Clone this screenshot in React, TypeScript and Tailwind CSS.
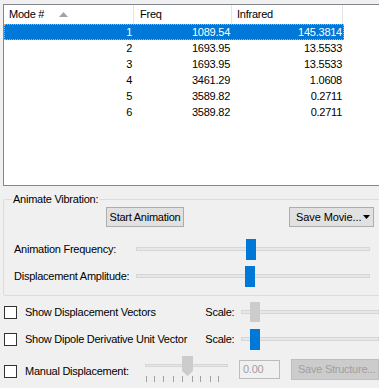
const modes = [
  { n: '1', freq: '1089.54', ir: '145.3814' },
  { n: '2', freq: '1693.95', ir: '13.5533' },
  { n: '3', freq: '1693.95', ir: '13.5533' },
  { n: '4', freq: '3461.29', ir: '1.0608' },
  { n: '5', freq: '3589.82', ir: '0.2711' },
  { n: '6', freq: '3589.82', ir: '0.2711' },
]

const ticks = [6, 14, 23, 33, 42, 52, 60, 70, 78]

interface TrackBarProps {
  width: number
  thumbLeft: number
  blue?: boolean
  tall?: boolean
}

function TrackBar({ width, thumbLeft, blue, tall }: TrackBarProps) {
  return (
    <div className={tall ? 'relative h-[21px]' : 'relative h-[20px]'} style={{ width }}>
      <div className="absolute left-0 right-0 top-[8px] h-[4px] bg-[#e7e7e7] border border-[#d6d6d6]" />
      <div
        className={
          blue
            ? 'absolute top-0 h-full w-[10px] bg-[#0078d7]'
            : 'absolute top-0 h-full w-[10px] bg-[#cccccc]'
        }
        style={{ left: thumbLeft }}
      />
    </div>
  )
}

function CheckBox() {
  return <div className="w-[13px] h-[13px] shrink-0 bg-white border border-[#333333]" />
}

export default function App() {
  return (
    <div
      className="w-[379px] h-[388px] overflow-hidden bg-[#f0f0f0] text-black text-[11px] tracking-[-0.25px]"
      style={{ fontFamily: '"Liberation Sans", Arial, sans-serif' }}
    >
      {/* List view */}
      <div className="ml-[3px] mt-[4px] w-[380px] h-[182px] bg-white border border-[#828790]">
        <div className="flex h-[19px] leading-[19px]">
          <div className="w-[130px] border-r border-[#e5e5e5] pl-[5px] flex items-center">
            <span>Mode #</span>
            <svg width="9" height="5" viewBox="0 0 9 5" className="ml-[15px]">
              <polygon points="4.5,0 9,5 0,5" fill="#a3a3a3" />
            </svg>
          </div>
          <div className="w-[98px] border-r border-[#e5e5e5] pl-[6px]">Freq</div>
          <div className="w-[111px] border-r border-[#e5e5e5] pl-[5px]">Infrared</div>
        </div>
        {modes.map((m, i) => (
          <div
            key={m.n}
            className={
              i === 0
                ? 'flex w-[340px] h-[16px] leading-[16px] bg-[#0078d7] text-white outline-1 outline-dotted outline-[#f5a04a] -outline-offset-1'
                : 'flex w-[340px] h-[16px] leading-[16px]'
            }
          >
            <div className="w-[130px] text-right pr-[2px]">{m.n}</div>
            <div className="w-[98px] text-right pr-[2px]">{m.freq}</div>
            <div className="w-[111px] text-right pr-[1px]">{m.ir}</div>
          </div>
        ))}
      </div>

      {/* Animate Vibration group */}
      <fieldset className="ml-[3px] mt-[6px] w-[380px] border border-[#dcdcdc] rounded-[2px] pb-[8px]">
        <legend className="ml-[8px] px-[1px] leading-[14px]">Animate Vibration:</legend>
        <div className="flex pt-[1px]">
          <button className="ml-[102px] w-[78px] h-[20px] bg-[#e1e1e1] border border-[#adadad] leading-[18px]">
            Start Animation
          </button>
          <button className="ml-[105px] w-[85px] h-[20px] bg-[#e1e1e1] border border-[#adadad] flex items-center pl-[6px] tracking-[-0.1px]">
            <span>Save Movie...</span>
            <svg width="7" height="4" viewBox="0 0 7 4" className="ml-[2px]">
              <polygon points="0,0 7,0 3.5,4" fill="#000" />
            </svg>
          </button>
        </div>
        <div className="flex items-center mt-[12px]">
          <div className="ml-[10px] w-[122px]">Animation Frequency:</div>
          <TrackBar width={234} thumbLeft={110} blue tall />
        </div>
        <div className="flex items-center mt-[6px]">
          <div className="ml-[10px] w-[122px]">Displacement Amplitude:</div>
          <TrackBar width={234} thumbLeft={109} blue tall />
        </div>
      </fieldset>

      {/* Display options */}
      <div className="flex items-center mt-[6px] h-[20px]">
        <div className="w-[208px] flex items-center pl-[4px] gap-[8px]">
          <CheckBox />
          <span>Show Displacement Vectors</span>
        </div>
        <div className="w-[36px]">Scale:</div>
        <TrackBar width={140} thumbLeft={9} />
      </div>
      <div className="flex items-center mt-[7px] h-[21px]">
        <div className="w-[208px] flex items-center pl-[4px] gap-[8px]">
          <CheckBox />
          <span>Show Dipole Derivative Unit Vector</span>
        </div>
        <div className="w-[36px]">Scale:</div>
        <TrackBar width={140} thumbLeft={9} blue tall />
      </div>
      <div className="flex items-start mt-[6px] h-[27px]">
        <div className="w-[140px] flex items-center pl-[4px] gap-[8px] mt-[7px]">
          <CheckBox />
          <span>Manual Displacement:</span>
        </div>
        <div className="w-[93px] flex flex-col">
          <div className="relative h-[20px]">
            <div className="absolute left-[5px] w-[83px] top-[8px] h-[3px] bg-[#e7e7e7] border border-[#d6d6d6]" />
            <svg width="11" height="20" viewBox="0 0 11 20" className="absolute left-[42px] top-0">
              <polygon points="0,0 11,0 11,15 5.5,20 0,15" fill="#cccccc" />
            </svg>
          </div>
          <div className="relative h-[7px]">
            {ticks.map((t) => (
              <div key={t} className="absolute top-0 w-px h-[6px] bg-[#a0a0a0]" style={{ left: t }} />
            ))}
          </div>
        </div>
        <div className="ml-[6px] mt-[4px] w-[41px] h-[19px] border border-[#bcbcbc] text-[#a0a0a0] leading-[17px] pl-[3px]">
          0.00
        </div>
        <button className="ml-[11px] mt-[3px] w-[88px] h-[21px] bg-[#cccccc] border border-[#bfbfbf] text-[#a0a0a0] text-left pl-[6px] leading-[19px]">
          Save Structure...
        </button>
      </div>
    </div>
  )
}
